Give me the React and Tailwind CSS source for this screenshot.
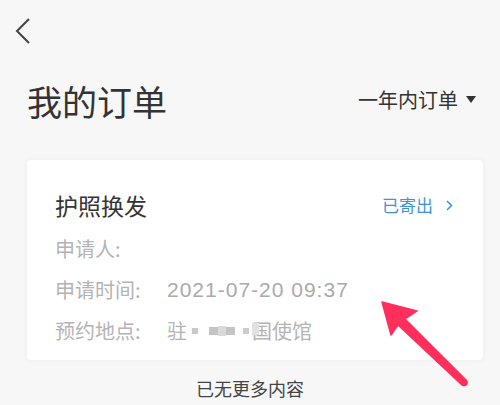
import React from "react";

const font = { fontFamily: '"Noto Sans CJK SC", "Noto Sans", sans-serif' };

function Row({ label, children }) {
  return (
    <div className="flex h-[41px] items-center text-[20px] text-[#b4b4b4]">
      <div className="w-[112px] shrink-0">{label}</div>
      <div className="flex items-center">{children}</div>
    </div>
  );
}

export default function App() {
  return (
    <div className="relative h-[405px] w-[500px] overflow-hidden bg-[#f7f7f7]" style={font}>
      <div className="flex h-[62px] items-center pl-[15px]">
        <svg width="16" height="26" viewBox="0 0 16 26" fill="none">
          <polyline points="14,1 2,13 14,25" stroke="#444" strokeWidth="2" strokeLinejoin="miter" />
        </svg>
      </div>
      <div className="flex h-[76px] items-center justify-between pl-[27px] pr-[24px]">
        <div className="text-[35px] leading-none text-[#333]">我的订单</div>
        <div className="flex items-center gap-[8px] text-[20px] text-[#333]">
          <span>一年内订单</span>
          <svg width="10" height="8" viewBox="0 0 10 8">
            <polygon points="0,0 10,0 5,7" fill="#333" />
          </svg>
        </div>
      </div>
      <div className="ml-[27px] mr-[17px] mt-[22px] h-[200px] rounded-[4px] bg-white pl-[28px] pr-[30px] pt-[32px] shadow-[0_0_6px_rgba(0,0,0,0.05)]">
        <div className="flex h-[26px] items-center justify-between">
          <div className="text-[23px] text-[#333]">护照换发</div>
          <div className="flex items-center gap-[13px] text-[17px] text-[#3d95d8]">
            <span>已寄出</span>
            <svg width="7" height="11" viewBox="0 0 7 11" fill="none">
              <polyline points="1,1 5.5,5.5 1,10" stroke="#3d95d8" strokeWidth="1.5" />
            </svg>
          </div>
        </div>
        <div className="mt-[10px]">
          <Row label="申请人:" />
          <Row label="申请时间:">
            <span
              className="tracking-[1px] text-[#aaaaaa]"
              style={{ fontFamily: '"Liberation Sans", sans-serif', fontSize: "21px" }}
            >
              2021-07-20 09:37
            </span>
          </Row>
          <Row label="预约地点:">
            <span>驻</span>
            <span className="ml-[5px] flex w-[60px] items-center">
              <span className="h-[6px] w-[6px] bg-[#c9c9c9]" />
              <span className="ml-[11px] h-[8px] w-[9px] bg-[#c4c4c4]" />
              <span className="h-[10px] w-[8px] bg-[#dadada]" />
              <span className="h-[8px] w-[9px] bg-[#c4c4c4]" />
              <span className="ml-[8px] h-[6px] w-[6px] bg-[#cccccc]" />
            </span>
            <span className="relative text-[#b4b4b4]">
              国使馆
              <span className="absolute left-0 top-[7px] h-[12px] w-[7px] bg-[#e2e2e2]" />
            </span>
          </Row>
        </div>
      </div>
      <div className="pt-[18px] text-center text-[18px] leading-[20px] text-[#444]">已无更多内容</div>
      <svg className="pointer-events-none absolute left-0 top-0" width="500" height="405" viewBox="0 0 500 405">
        <path
          d="M382,302 L417,311 L405,319 L467,381 Q468,387 462,385 L398,325 L391,335 Z"
          fill="#ff2f5c"
          stroke="#ff2f5c"
          strokeWidth="1.5"
          strokeLinejoin="round"
        />
      </svg>
    </div>
  );
}
